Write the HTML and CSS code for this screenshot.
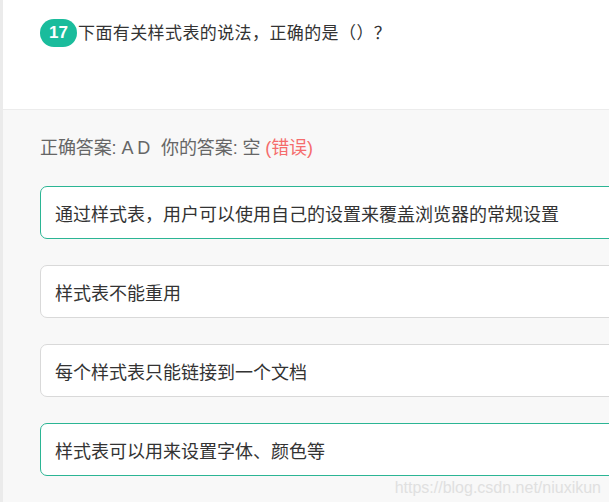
FILE: index.html
```html
<!DOCTYPE html>
<html lang="zh">
<head>
<meta charset="utf-8">
<title>题目 17</title>
<link rel="stylesheet" href="styles.css">
</head>
<body>
<div class="page">
  <div class="question">
    <span class="badge">17</span>
    <span class="q-text">下面有关样式表的说法，正确的是（）？</span>
  </div>
  <div class="answers">
    <div class="result">
      <span class="label">正确答案:</span> <span class="val">A D</span>
      <span class="label gap">你的答案:</span> <span class="val">空</span>
      <span class="wrong">(错误)</span>
    </div>
    <div class="options">
      <div class="option correct">通过样式表，用户可以使用自己的设置来覆盖浏览器的常规设置</div>
      <div class="option">样式表不能重用</div>
      <div class="option">每个样式表只能链接到一个文档</div>
      <div class="option correct">样式表可以用来设置字体、颜色等</div>
    </div>
    <div class="watermark">https://blog.csdn.net/niuxikun</div>
  </div>
</div>
</body>
</html>
```

FILE: styles.css
```css
html, body {
  margin: 0;
  padding: 0;
  height: 100%;
  overflow: hidden;
}
body {
  background: #f8f8f8;
  font-family: "Liberation Sans", "Noto Sans CJK SC", sans-serif;
  color: #333;
}
.page {
  border-left: 3px solid #ebebeb;
  min-height: 100%;
  box-sizing: border-box;
}
.question {
  background: #fff;
  border-bottom: 1px solid #ececec;
  padding: 19px 0 0 37px;
  box-sizing: border-box;
  height: 110px;
  display: flex;
  align-items: flex-start;
}
.badge {
  display: inline-flex;
  align-items: center;
  justify-content: center;
  width: 37px;
  height: 28px;
  border-radius: 14px;
  background: #1abc9c;
  color: #fff;
  font-size: 17px;
  font-weight: bold;
  font-family: "Liberation Sans", sans-serif;
  flex-shrink: 0;
}
.q-text {
  font-size: 17px;
  line-height: 28px;
  color: #333;
  margin-left: 1px;
  letter-spacing: 0.4px;
  position: relative;
  top: 1px;
}
.answers {
  padding: 27px 0 0 37px;
}
.result {
  font-size: 18px;
  line-height: 22px;
  color: #666;
  white-space: nowrap;
  letter-spacing: -0.1px;
}
.result .gap {
  margin-left: 6px;
}
.wrong {
  color: #f56c6c;
}
.options {
  margin-top: 27px;
  margin-right: -60px;
  display: flex;
  flex-direction: column;
  gap: 26px;
}
.option {
  height: 53px;
  box-sizing: border-box;
  border: 1px solid #d9d9d9;
  border-radius: 7px;
  background: #fff;
  padding: 0 14px;
  display: flex;
  align-items: center;
  font-size: 18px;
  color: #333;
  white-space: nowrap;
}
.option.correct {
  border-color: #2bb594;
}
.watermark {
  text-align: right;
  margin-top: 3px;
  padding-right: 8px;
  font-size: 16px;
  color: #e0e0e0;
  font-family: "Liberation Sans", sans-serif;
}
```
